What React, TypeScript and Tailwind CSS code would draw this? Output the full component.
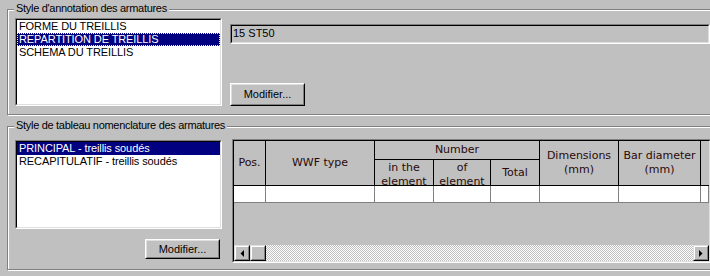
import React from "react";

const sunkenOuter =
  "border border-t-[#808080] border-l-[#808080] border-b-white border-r-white";
const sunkenInner =
  "border border-t-black border-l-black border-b-[#dfdfdf] border-r-[#dfdfdf]";
const raisedOuter =
  "border border-t-white border-l-white border-b-black border-r-black";
const raisedInner =
  "border border-t-[#dfdfdf] border-l-[#dfdfdf] border-b-[#808080] border-r-[#808080]";
const sbOuter =
  "border border-t-[#dfdfdf] border-l-[#dfdfdf] border-b-black border-r-black";
const sbInner =
  "border border-t-white border-l-white border-b-[#808080] border-r-[#808080]";

function Button({ className }: { className: string }) {
  return (
    <div className={`${raisedOuter} ${className} bg-[#c0c0c0]`}>
      <div className={`${raisedInner} w-full h-full flex items-center justify-center text-[11px] leading-[13px]`}>
        Modifier...
      </div>
    </div>
  );
}

function ListBox({
  className,
  items,
  selected,
  focus,
}: {
  className: string;
  items: string[];
  selected: number;
  focus: boolean;
}) {
  return (
    <div className={`${sunkenOuter} ${className}`}>
      <div className={`${sunkenInner} w-full h-full bg-white overflow-hidden`}>
        {items.map((t, i) =>
          i === selected ? (
            <div
              key={i}
              className={`h-[13px] leading-[11px] bg-[#000080] text-white whitespace-nowrap tracking-[-0.1px] pl-[1px] border border-dotted ${
                focus ? "border-[#ffffa0]" : "border-[#000080]"
              }`}
            >
              {t}
            </div>
          ) : (
            <div key={i} className="h-[13px] leading-[13px] whitespace-nowrap tracking-[-0.1px] pl-[2px]">
              {t}
            </div>
          )
        )}
      </div>
    </div>
  );
}

function ScrollBtn({ dir }: { dir: "left" | "right" | "none" }) {
  return (
    <div className={`${sbOuter} w-[16px] h-[16px] bg-[#c0c0c0] shrink-0`}>
      <div className={`${sbInner} w-full h-full flex items-center justify-center`}>
        {dir === "left" && (
          <svg width="4" height="7" viewBox="0 0 4 7">
            <polygon points="4,0 4,7 0.5,3.5" fill="#000" />
          </svg>
        )}
        {dir === "right" && (
          <svg width="4" height="7" viewBox="0 0 4 7">
            <polygon points="0,0 0,7 3.5,3.5" fill="#000" />
          </svg>
        )}
      </div>
    </div>
  );
}

export default function App() {
  const hdr =
    "border-r border-b border-black flex items-center justify-center text-center overflow-hidden shrink-0";
  const dataCell = "h-[17px] border-r border-b border-[#808080] bg-white shrink-0";
  const widths = [32, 109, 59, 57, 49, 79, 82, 8];
  return (
    <div className="w-[710px] h-[276px] overflow-hidden bg-[#c0c0c0] text-black font-['Liberation_Sans',Arial,sans-serif] text-[11px]">
      <div className="pt-[9px] pl-[7px]">
        {/* Group 1 */}
        <div className="relative w-[760px] h-[106px] border border-[#808080] shadow-[1px_1px_0_#ffffff,inset_1px_1px_0_#ffffff]">
          <div className="absolute left-[6px] top-[-8px] px-[2px] bg-[#c0c0c0] leading-[13px] tracking-[-0.3px] whitespace-nowrap">
            Style d'annotation des armatures
          </div>
          <div className="flex pl-[7px] pt-[8px]">
            <ListBox
              className="w-[207px] h-[88px] shrink-0"
              items={["FORME DU TREILLIS", "REPARTITION DE TREILLIS", "SCHEMA DU TREILLIS"]}
              selected={1}
              focus={true}
            />
            <div className="ml-[8px] flex flex-col">
              <div className={`${sunkenOuter} mt-[6px] w-[480px] h-[20px]`}>
                <div className={`${sunkenInner} w-full h-full bg-[#c0c0c0] pl-[1px] leading-[15px]`}>
                  15 ST50
                </div>
              </div>
              <Button className="mt-[39px] w-[75px] h-[23px]" />
            </div>
          </div>
        </div>

        {/* Group 2 */}
        <div className="relative mt-[11px] w-[760px] h-[144px] border border-[#808080] shadow-[1px_1px_0_#ffffff,inset_1px_1px_0_#ffffff]">
          <div className="absolute left-[6px] top-[-8px] px-[2px] bg-[#c0c0c0] leading-[13px] tracking-[-0.3px] whitespace-nowrap">
            Style de tableau nomenclature des armatures
          </div>
          <div className="flex pl-[7px]">
            <div className="pt-[13px] w-[207px] flex flex-col shrink-0">
              <ListBox
                className="w-[207px] h-[89px]"
                items={["PRINCIPAL - treillis soudés", "RECAPITULATIF - treillis soudés"]}
                selected={0}
                focus={false}
              />
              <Button className="mt-[10px] mr-[2px] self-end w-[75px] h-[20px]" />
            </div>
            <div className={`${sunkenOuter} ml-[10px] mt-[12px] w-[479px] h-[124px] shrink-0`}>
              <div className={`${sunkenInner} w-full h-full bg-[#c0c0c0] flex flex-col overflow-hidden`}>
                {/* header */}
                <div className="flex h-[45px] font-['DejaVu_Sans',sans-serif] text-[11px] leading-[14px] text-[#2a0a0a]">
                  <div className={`${hdr} w-[32px]`}>Pos.</div>
                  <div className={`${hdr} w-[109px]`}>WWF type</div>
                  <div className="flex flex-col w-[165px] shrink-0">
                    <div className={`${hdr} h-[19px] w-[165px]`}>Number</div>
                    <div className="flex h-[26px]">
                      <div className="w-[59px] h-[26px] border-r border-b border-black text-center overflow-hidden pt-[1px] shrink-0">
                        in the element
                      </div>
                      <div className="w-[57px] h-[26px] border-r border-b border-black text-center overflow-hidden pt-[1px] shrink-0">
                        of element
                      </div>
                      <div className={`${hdr} w-[49px] h-[26px]`}>Total</div>
                    </div>
                  </div>
                  <div className={`${hdr} w-[79px]`}>
                    Dimensions
                    <br />
                    (mm)
                  </div>
                  <div className={`${hdr} w-[82px] whitespace-nowrap`}>
                    Bar diameter
                    <br />
                    (mm)
                  </div>
                  <div className={`${hdr} w-[8px] border-r-0`}></div>
                </div>
                {/* data row */}
                <div className="flex">
                  {widths.map((w, i) => (
                    <div key={i} className={dataCell} style={{ width: w }} />
                  ))}
                </div>
                <div className="flex-1" />
                {/* scrollbar */}
                <div className="flex h-[16px]">
                  <ScrollBtn dir="left" />
                  <ScrollBtn dir="none" />
                  <div className="flex-1 h-[16px] bg-[repeating-conic-gradient(#c0c0c0_0_25%,#ffffff_0_50%)] bg-[length:2px_2px]" />
                  <ScrollBtn dir="right" />
                </div>
              </div>
            </div>
          </div>
        </div>
      </div>
    </div>
  );
}
